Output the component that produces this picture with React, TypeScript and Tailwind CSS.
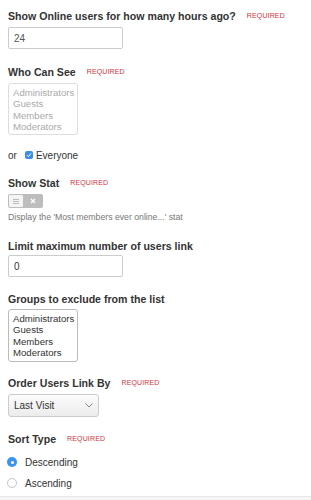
import React from "react";

const Req = () => (
  <span className="ml-[11px] text-[7px] leading-[12px] tracking-[0.02em] text-[#d0343f] font-normal">REQUIRED</span>
);

const Label = ({ children, req, className = "" }: { children: React.ReactNode; req?: boolean; className?: string }) => (
  <div className={`flex items-center h-[12px] ${className}`}>
    <span className="text-[10.6px] leading-[12px] font-bold text-[#333]">{children}</span>
    {req && <Req />}
  </div>
);

export default function App() {
  const groups = ["Administrators", "Guests", "Members", "Moderators"];
  return (
    <div
      className="w-[311px] h-[500px] bg-white overflow-hidden flex flex-col"
      style={{ fontFamily: '"Liberation Sans", Arial, sans-serif' }}
    >
      <div className="px-[8px] pt-[10px] flex flex-col">
        <Label req>Show Online users for how many hours ago?</Label>
        <div className="mt-[5px] w-[115px] h-[22px] border border-[#ccc] rounded-[2px] flex items-center px-[5px] text-[10px] text-[#555]">24</div>

        <Label req className="mt-[17px]">Who Can See</Label>
        <div className="mt-[5px] w-[70px] h-[52px] border border-[#ddd] rounded-[3px] px-[4px] pt-[3px] text-[9.6px] leading-[11.3px] text-[#aaa]">
          {groups.map((g) => (
            <div key={g}>{g}</div>
          ))}
        </div>

        <div className="mt-[14px] h-[12px] flex items-center text-[10px] text-[#333]">
          <span>or</span>
          <span className="ml-[8px] w-[8px] h-[8px] rounded-[2px] bg-[#3a8ee6] flex items-center justify-center">
            <svg width="6" height="6" viewBox="0 0 6 6">
              <path d="M1 3.2 L2.4 4.6 L5 1.4" stroke="white" strokeWidth="1" fill="none" />
            </svg>
          </span>
          <span className="ml-[3px]">Everyone</span>
        </div>

        <Label req className="mt-[16px]">Show Stat</Label>
        <div className="mt-[5px] w-[35px] h-[14px] rounded-[2px] bg-[#bdbdbd] flex items-center p-[1px]">
          <div className="w-[14px] h-[12px] bg-[#f4f4f4] rounded-[1px] flex flex-col items-center justify-center gap-[1px]">
            <span className="w-[6px] h-[1px] bg-[#bbb]" />
            <span className="w-[6px] h-[1px] bg-[#bbb]" />
            <span className="w-[6px] h-[1px] bg-[#bbb]" />
          </div>
          <div className="flex-1 flex items-center justify-center">
            <svg width="6" height="6" viewBox="0 0 6 6">
              <path d="M1 1 L5 5 M5 1 L1 5" stroke="white" strokeWidth="1.4" />
            </svg>
          </div>
        </div>
        <div className="mt-[4px] h-[10px] text-[8.7px] leading-[10px] text-[#777]">
          Display the 'Most members ever online...' stat
        </div>

        <Label className="mt-[18px]">Limit maximum number of users link</Label>
        <div className="mt-[3px] w-[115px] h-[22px] border border-[#ccc] rounded-[2px] flex items-center px-[5px] text-[10px] text-[#333]">0</div>

        <Label className="mt-[16px]">Groups to exclude from the list</Label>
        <div className="mt-[4px] w-[70px] h-[53px] border border-[#bbb] rounded-[3px] px-[4px] pt-[3px] text-[9.6px] leading-[11.3px] text-[#333]">
          {groups.map((g) => (
            <div key={g}>{g}</div>
          ))}
        </div>

        <Label req className="mt-[15px]">Order Users Link By</Label>
        <div className="mt-[5px] w-[91px] h-[23px] border border-[#ccc] rounded-[3px] bg-gradient-to-b from-[#fcfcfc] to-[#ececec] flex items-center justify-between pl-[5px] pr-[5px] text-[10px] text-[#333]">
          <span>Last Visit</span>
          <svg width="8" height="5" viewBox="0 0 8 5">
            <path d="M0.5 0.5 L4 4 L7.5 0.5" stroke="#888" strokeWidth="1" fill="none" />
          </svg>
        </div>

        <Label req className="mt-[16px]">Sort Type</Label>
        <div className="mt-[11px] h-[12px] flex items-center text-[10px] text-[#333]">
          <span className="ml-[-1px] w-[10px] h-[10px] rounded-full bg-[#3a93f0] flex items-center justify-center">
            <span className="w-[3px] h-[3px] rounded-full bg-white" />
          </span>
          <span className="ml-[8px]">Descending</span>
        </div>
        <div className="mt-[9px] h-[12px] flex items-center text-[10px] text-[#333]">
          <span className="ml-[-1px] w-[10px] h-[10px] rounded-full bg-white border border-[#c4c4c4]" />
          <span className="ml-[8px]">Ascending</span>
        </div>
      </div>
      <div className="mt-[7px] flex-1 border-t border-[#e8e8e8] bg-[#f6f6f6]" />
    </div>
  );
}
